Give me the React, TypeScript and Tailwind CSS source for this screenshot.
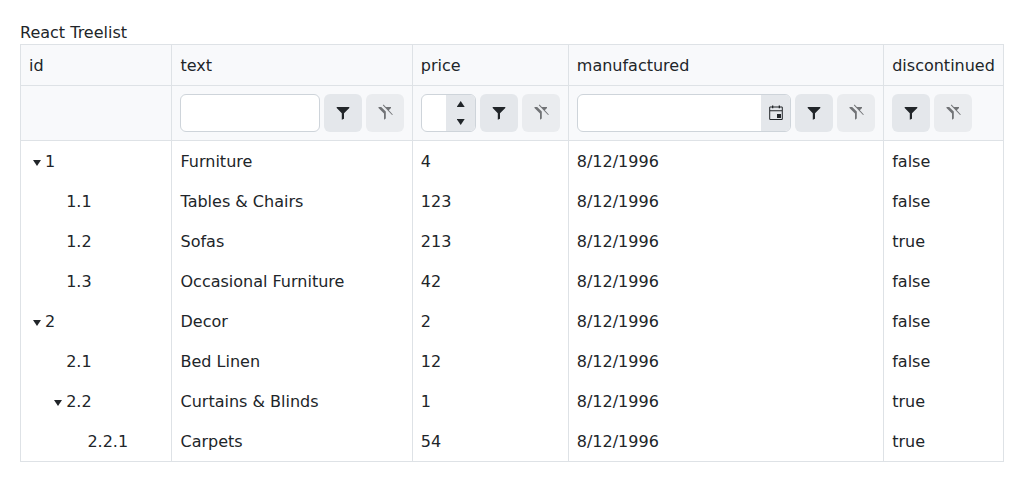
import React from 'react';

type Row = {
  id: string;
  level: number;
  expanded?: boolean;
  text: string;
  price: number;
  discontinued: boolean;
};

const rows: Row[] = [
  { id: '1', level: 0, expanded: true, text: 'Furniture', price: 4, discontinued: false },
  { id: '1.1', level: 1, text: 'Tables & Chairs', price: 123, discontinued: false },
  { id: '1.2', level: 1, text: 'Sofas', price: 213, discontinued: true },
  { id: '1.3', level: 1, text: 'Occasional Furniture', price: 42, discontinued: false },
  { id: '2', level: 0, expanded: true, text: 'Decor', price: 2, discontinued: false },
  { id: '2.1', level: 1, text: 'Bed Linen', price: 12, discontinued: false },
  { id: '2.2', level: 1, expanded: true, text: 'Curtains & Blinds', price: 1, discontinued: true },
  { id: '2.2.1', level: 2, text: 'Carpets', price: 54, discontinued: true },
];

const columns = ['id', 'text', 'price', 'manufactured', 'discontinued'];

const grid = 'grid grid-cols-[151px_241px_156px_315px_119px]';
const divider = 'border-r border-[#dee2e6] last:border-r-0';
const textCell = `${divider} pl-[7.8px] pr-2 pt-[9px] pb-[7px] first:pl-2 last:pl-[8.2px]`;
const shiftedCell = `${divider} pl-[8.5px] pr-2 pt-[9px] pb-[7px]`;

function FilterButtons() {
  return (
    <>
      <button aria-label="Filter" className="flex size-[38px] shrink-0 items-center justify-center rounded-md bg-[#e4e7eb]">
        <svg viewBox="0 0 16 16" className="size-4 fill-current">
          <path d="M1.7 2h12.6v1L9 8.3v5.4L6.8 14.8V8.2L1.7 3z" />
        </svg>
      </button>
      <button aria-label="Clear" disabled className="flex size-[38px] shrink-0 items-center justify-center rounded-md bg-[#eaecef] text-[#717376]">
        <svg viewBox="0 0 16 16" className="size-4 overflow-visible fill-current">
          <path d="M1.5 2H4.2L8.8 6.6v7L7 14.8V8.5L1.5 3z" />
          <path d="M8.4 2H14v1.1l-2.5 2.5z" />
          <path d="M5.8.3 6.5-.4 15.8 9.4l-.7.7z" />
        </svg>
      </button>
    </>
  );
}

function CalendarIcon() {
  return (
    <svg viewBox="0 0 16 16" className="size-4 fill-current">
      <path
        fillRule="evenodd"
        d="M2 1.5h2V.4h1.3v1.1h5.4V.4H12v1.1h2l.8.7v12.1l-.8.7H2l-.8-.7V2.2zM2.2 2.5v2.8h11.6V2.5H12v.8h-1.3v-.8H5.3v.8H4v-.8zM2.2 6.3V14h11.6V6.3z"
      />
      <path d="M9 9h4v4H9z" />
    </svg>
  );
}

const inputBox = 'flex h-[38px] overflow-hidden rounded-md border border-[#ced4da] bg-white';

export default function App() {
  return (
    <div className="px-5 pt-[21px] font-['DejaVu_Sans',sans-serif] text-base leading-6 text-[#212529]">
      <div className="h-[23px]">React Treelist</div>
      <div className="w-[984px] border border-[#dee2e6]">
        <div className={`${grid} h-[41px] border-b border-[#dee2e6] bg-[#f8f9fb]`}>
          {columns.map((name) => (
            <div key={name} className={name === 'text' ? shiftedCell : textCell}>{name}</div>
          ))}
        </div>
        <div className={`${grid} h-[55px] border-b border-[#dee2e6] bg-[#f8f9fb]`}>
          <div className={divider} />
          <div className={`${divider} flex gap-1 p-2`}>
            <input aria-label="text filter" className={`${inputBox} w-[140px]`} />
            <FilterButtons />
          </div>
          <div className={`${divider} flex gap-1 p-2`}>
            <div className={`${inputBox} w-[55px]`}>
              <input aria-label="price filter" className="min-w-0 flex-1" />
              <div className="flex w-[29px] flex-col items-center justify-between bg-[#e4e7eb] py-1.5">
                <svg viewBox="0 0 8 6" className="h-1.5 w-2 fill-current"><path d="M3.7 0 7.7 6H-.3z" /></svg>
                <svg viewBox="0 0 8 6" className="h-1.5 w-2 fill-current"><path d="M3.7 6-.3 0h8z" /></svg>
              </div>
            </div>
            <FilterButtons />
          </div>
          <div className={`${divider} flex gap-1 p-2`}>
            <div className={`${inputBox} w-[214px]`}>
              <input aria-label="manufactured filter" className="min-w-0 flex-1" />
              <div className="flex w-[29px] items-center justify-center bg-[#e4e7eb]"><CalendarIcon /></div>
            </div>
            <FilterButtons />
          </div>
          <div className={`${divider} flex gap-1 p-2`}>
            <FilterButtons />
          </div>
        </div>
        {rows.map((row) => (
          <div key={row.id} className={`${grid} h-10`}>
            <div className={`${textCell} flex`}>
              <span style={{ width: row.level * 21.2 + 16 }} className="flex shrink-0 items-center justify-end">
                {row.expanded && (
                  <svg viewBox="0 0 8 6" className="mt-0.5 mr-1 h-1.5 w-2 fill-current"><path d="M4 6 0 0h8z" /></svg>
                )}
              </span>
              <span>{row.id}</span>
            </div>
            <div className={shiftedCell}>{row.text}</div>
            <div className={textCell}>{row.price}</div>
            <div className={textCell}>8/12/1996</div>
            <div className={textCell}>{String(row.discontinued)}</div>
          </div>
        ))}
      </div>
    </div>
  );
}
